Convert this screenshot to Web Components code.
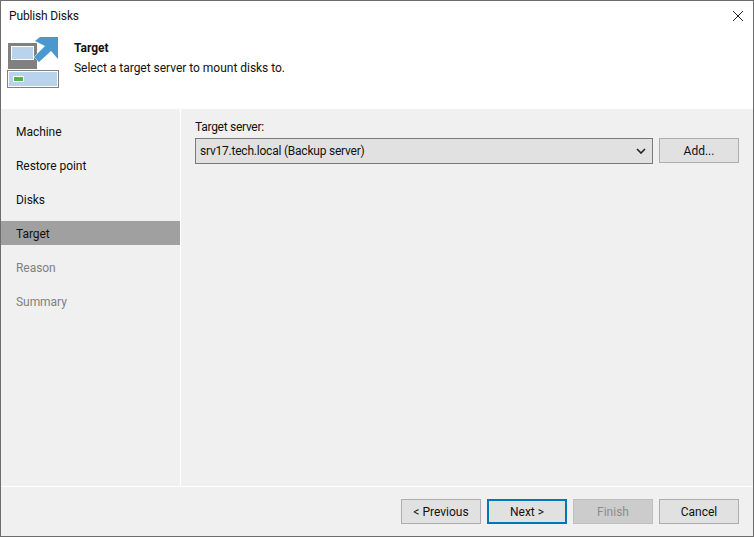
<!DOCTYPE html>
<html>
<head>
<meta charset="utf-8">
<title>Publish Disks</title>
<style>
  html, body { margin: 0; padding: 0; height: 100%; background: #f0f0f0; }
  body { font: 12px Roboto, "Open Sans", "Liberation Sans", sans-serif; color: #111; }
</style>
</head>
<body>
<wizard-window>
  <span slot="title" style="letter-spacing:-.15px">Publish Disks</span>
  <wizard-header slot="header">
    <span slot="heading">Target</span>
    <span slot="description">Select a target server to mount disks to.</span>
  </wizard-header>
  <step-item slot="steps">Machine</step-item>
  <step-item slot="steps">Restore point</step-item>
  <step-item slot="steps">Disks</step-item>
  <step-item slot="steps" active>Target</step-item>
  <step-item slot="steps" disabled>Reason</step-item>
  <step-item slot="steps" disabled>Summary</step-item>

  <label-text>Target server:</label-text>
  <div style="display:flex;gap:6px;margin-top:4px">
    <combo-box style="flex:1">srv17.tech.local (Backup server)</combo-box>
    <win-button>Add...</win-button>
  </div>

  <win-button slot="footer">&lt; Previous</win-button>
  <win-button slot="footer" focused>Next &gt;</win-button>
  <win-button slot="footer" disabled>Finish</win-button>
  <win-button slot="footer">Cancel</win-button>
</wizard-window>

<script>
class WizardWindow extends HTMLElement {
  connectedCallback() {
    this.attachShadow({ mode: 'open' });
    this.shadowRoot.innerHTML = `
      <style>
        :host {
          display: flex;
          flex-direction: column;
          box-sizing: border-box;
          width: 754px;
          height: 537px;
          border: 1px solid #6d6d6d;
          background: #f0f0f0;
        }
        .titlebar {
          height: 29px;
          background: #fff;
          display: flex;
          align-items: center;
          justify-content: space-between;
          padding: 0 10px 0 8px;
          flex: none;
        }
        .titlebar svg { display: block; }
        .main { flex: 1; display: flex; min-height: 0; }
        .steps {
          width: 179px;
          border-right: 1px solid #fff;
          padding-top: 10px;
          display: flex;
          flex-direction: column;
          gap: 10px;
          flex: none;
        }
        .content { flex: 1; padding: 10px 14px 0 14px; }
        .footer {
          height: 50px;
          flex: none;
          box-sizing: border-box;
          border-top: 1px solid #fff;
          display: flex;
          justify-content: flex-end;
          align-items: flex-start;
          gap: 6px;
          padding: 12px 14px 0 0;
        }
      </style>
      <div class="titlebar">
        <slot name="title"></slot>
        <svg width="10" height="10" viewBox="0 0 10 10"><path d="M0 0L10 10M10 0L0 10" stroke="#222" stroke-width="1" fill="none"/></svg>
      </div>
      <slot name="header"></slot>
      <div class="main">
        <div class="steps"><slot name="steps"></slot></div>
        <div class="content"><slot></slot></div>
      </div>
      <div class="footer"><slot name="footer"></slot></div>
    `;
  }
}

class WizardHeader extends HTMLElement {
  connectedCallback() {
    this.attachShadow({ mode: 'open' });
    this.shadowRoot.innerHTML = `
      <style>
        :host {
          display: flex;
          height: 79px;
          background: #fff;
          flex: none;
          box-sizing: border-box;
          padding: 7px 0 0 6px;
        }
        svg { display: block; flex: none; }
        .text { margin-left: 14px; padding-top: 1px; }
        .heading { font-weight: 700; height: 20px; line-height: 20px; }
        .description { height: 20px; line-height: 20px; letter-spacing: -.02px; }
      </style>
      <svg width="53" height="52" viewBox="0 0 53 52" shape-rendering="crispEdges">
        <rect x="1" y="6" width="29" height="26" fill="#808080"/>
        <rect x="4.5" y="9.5" width="22" height="13" fill="#b9d3ec" stroke="#fff" stroke-width="1"/>
        <path d="M33 0L51 0L51 22L44 14L32 25L27 20L38 9L28 4Z" fill="#4a98cd" stroke="#fff" stroke-width="1" paint-order="stroke" shape-rendering="auto"/>
        <rect x="0.5" y="33.5" width="51" height="17" fill="#b9d3ec" stroke="#808080" stroke-width="1"/>
        <rect x="1.5" y="34.5" width="49" height="15" fill="none" stroke="#fff" stroke-width="1"/>
        <rect x="6" y="39" width="11" height="6" fill="#fff"/>
        <rect x="7" y="40" width="9" height="4" fill="#4cb648"/>
      </svg>
      <div class="text">
        <div class="heading"><slot name="heading"></slot></div>
        <div class="description"><slot name="description"></slot></div>
      </div>
    `;
  }
}

class StepItem extends HTMLElement {
  connectedCallback() {
    this.attachShadow({ mode: 'open' });
    this.shadowRoot.innerHTML = `
      <style>
        :host {
          display: block;
          height: 24px;
          line-height: 26px;
          padding-left: 15px;
          letter-spacing: -.05px;
        }
        :host([active]) { background: #a0a0a0; }
        :host([disabled]) { color: #808080; }
      </style>
      <slot></slot>
    `;
  }
}

class LabelText extends HTMLElement {
  connectedCallback() {
    this.attachShadow({ mode: 'open' });
    this.shadowRoot.innerHTML = `
      <style>
        :host { display: block; height: 15px; line-height: 17px; letter-spacing: -.28px; }
      </style>
      <slot></slot>
    `;
  }
}

class ComboBox extends HTMLElement {
  connectedCallback() {
    this.attachShadow({ mode: 'open' });
    this.shadowRoot.innerHTML = `
      <style>
        :host {
          display: flex;
          align-items: center;
          justify-content: space-between;
          box-sizing: border-box;
          height: 26px;
          border: 1px solid #7a7a7a;
          background: #e1e1e1;
          padding: 0 6px 0 4px;
          letter-spacing: -.22px;
        }
        svg { display: block; }
      </style>
      <slot></slot>
      <svg width="10" height="6" viewBox="0 0 10 6"><path d="M1 1L5 5L9 1" stroke="#222" stroke-width="1.6" fill="none"/></svg>
    `;
  }
}

class WinButton extends HTMLElement {
  connectedCallback() {
    this.attachShadow({ mode: 'open' });
    this.shadowRoot.innerHTML = `
      <style>
        :host {
          display: flex;
          align-items: center;
          justify-content: center;
          box-sizing: border-box;
          width: 80px;
          height: 25px;
          border: 1px solid #adadad;
          background: #e1e1e1;
        }
        :host([focused]) { border: 2px solid #0078b4; }
        :host([disabled]) { background: #cccccc; border-color: #bfbfbf; color: #8c8c8c; }
      </style>
      <slot></slot>
    `;
  }
}

customElements.define('wizard-window', WizardWindow);
customElements.define('wizard-header', WizardHeader);
customElements.define('step-item', StepItem);
customElements.define('label-text', LabelText);
customElements.define('combo-box', ComboBox);
customElements.define('win-button', WinButton);
</script>
</body>
</html>
